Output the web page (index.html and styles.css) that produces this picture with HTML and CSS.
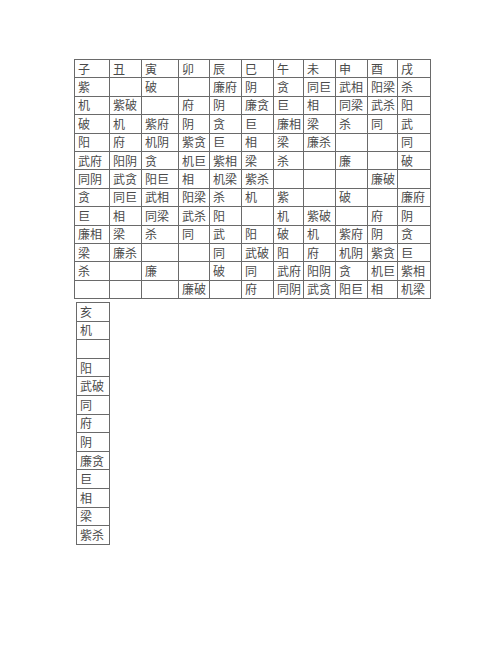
FILE: index.html
```html
<!DOCTYPE html>
<html lang="zh">
<head>
<meta charset="utf-8">
<title>紫微星系表</title>
<link rel="stylesheet" href="styles.css">
</head>
<body>
<div class="page">
<table class="grid main">
<colgroup>
<col style="width:35px"><col style="width:32px"><col style="width:37px"><col style="width:31px"><col style="width:32px"><col style="width:32px"><col style="width:30px"><col style="width:32px"><col style="width:32px"><col style="width:30px"><col style="width:33px">
</colgroup>
<tr><td>子</td><td>丑</td><td>寅</td><td>卯</td><td>辰</td><td>巳</td><td>午</td><td>未</td><td>申</td><td>酉</td><td>戌</td></tr>
<tr><td>紫</td><td></td><td>破</td><td></td><td>廉府</td><td>阴</td><td>贪</td><td>同巨</td><td>武相</td><td>阳梁</td><td>杀</td></tr>
<tr><td>机</td><td>紫破</td><td></td><td>府</td><td>阴</td><td>廉贪</td><td>巨</td><td>相</td><td>同梁</td><td>武杀</td><td>阳</td></tr>
<tr><td>破</td><td>机</td><td>紫府</td><td>阴</td><td>贪</td><td>巨</td><td>廉相</td><td>梁</td><td>杀</td><td>同</td><td>武</td></tr>
<tr><td>阳</td><td>府</td><td>机阴</td><td>紫贪</td><td>巨</td><td>相</td><td>梁</td><td>廉杀</td><td></td><td></td><td>同</td></tr>
<tr><td>武府</td><td>阳阴</td><td>贪</td><td>机巨</td><td>紫相</td><td>梁</td><td>杀</td><td></td><td>廉</td><td></td><td>破</td></tr>
<tr><td>同阴</td><td>武贪</td><td>阳巨</td><td>相</td><td>机梁</td><td>紫杀</td><td></td><td></td><td></td><td>廉破</td><td></td></tr>
<tr><td>贪</td><td>同巨</td><td>武相</td><td>阳梁</td><td>杀</td><td>机</td><td>紫</td><td></td><td>破</td><td></td><td>廉府</td></tr>
<tr><td>巨</td><td>相</td><td>同梁</td><td>武杀</td><td>阳</td><td></td><td>机</td><td>紫破</td><td></td><td>府</td><td>阴</td></tr>
<tr><td>廉相</td><td>梁</td><td>杀</td><td>同</td><td>武</td><td>阳</td><td>破</td><td>机</td><td>紫府</td><td>阴</td><td>贪</td></tr>
<tr><td>梁</td><td>廉杀</td><td></td><td></td><td>同</td><td>武破</td><td>阳</td><td>府</td><td>机阴</td><td>紫贪</td><td>巨</td></tr>
<tr><td>杀</td><td></td><td>廉</td><td></td><td>破</td><td>同</td><td>武府</td><td>阳阴</td><td>贪</td><td>机巨</td><td>紫相</td></tr>
<tr><td></td><td></td><td></td><td>廉破</td><td></td><td>府</td><td>同阴</td><td>武贪</td><td>阳巨</td><td>相</td><td>机梁</td></tr>
</table>
<table class="grid side">
<colgroup><col style="width:33px"></colgroup>
<tr><td>亥</td></tr>
<tr><td>机</td></tr>
<tr><td></td></tr>
<tr><td>阳</td></tr>
<tr><td>武破</td></tr>
<tr><td>同</td></tr>
<tr><td>府</td></tr>
<tr><td>阴</td></tr>
<tr><td>廉贪</td></tr>
<tr><td>巨</td></tr>
<tr><td>相</td></tr>
<tr><td>梁</td></tr>
<tr><td>紫杀</td></tr>
</table>
</div>
</body>
</html>
```
FILE: styles.css
```css
html, body {
  margin: 0;
  padding: 0;
  background: #ffffff;
}
.page {
  padding: 59px 0 0 74px;
  font-family: "Noto Sans CJK SC", "Noto Sans CJK JP", sans-serif;
  font-size: 12px;
  color: #4a4a4a;
}
.grid {
  border-collapse: collapse;
  table-layout: fixed;
}
.grid td {
  border: 1px solid #6a6a6a;
  padding: 0 0 0 3px;
  height: 17.4px;
  line-height: 14px;
  vertical-align: middle;
  white-space: nowrap;
  overflow: hidden;
}
.main {
  width: 356px;
}
.side {
  width: 33px;
  margin: 3px 0 0 2px;
}
.side td {
  height: 17.6px;
}
```
